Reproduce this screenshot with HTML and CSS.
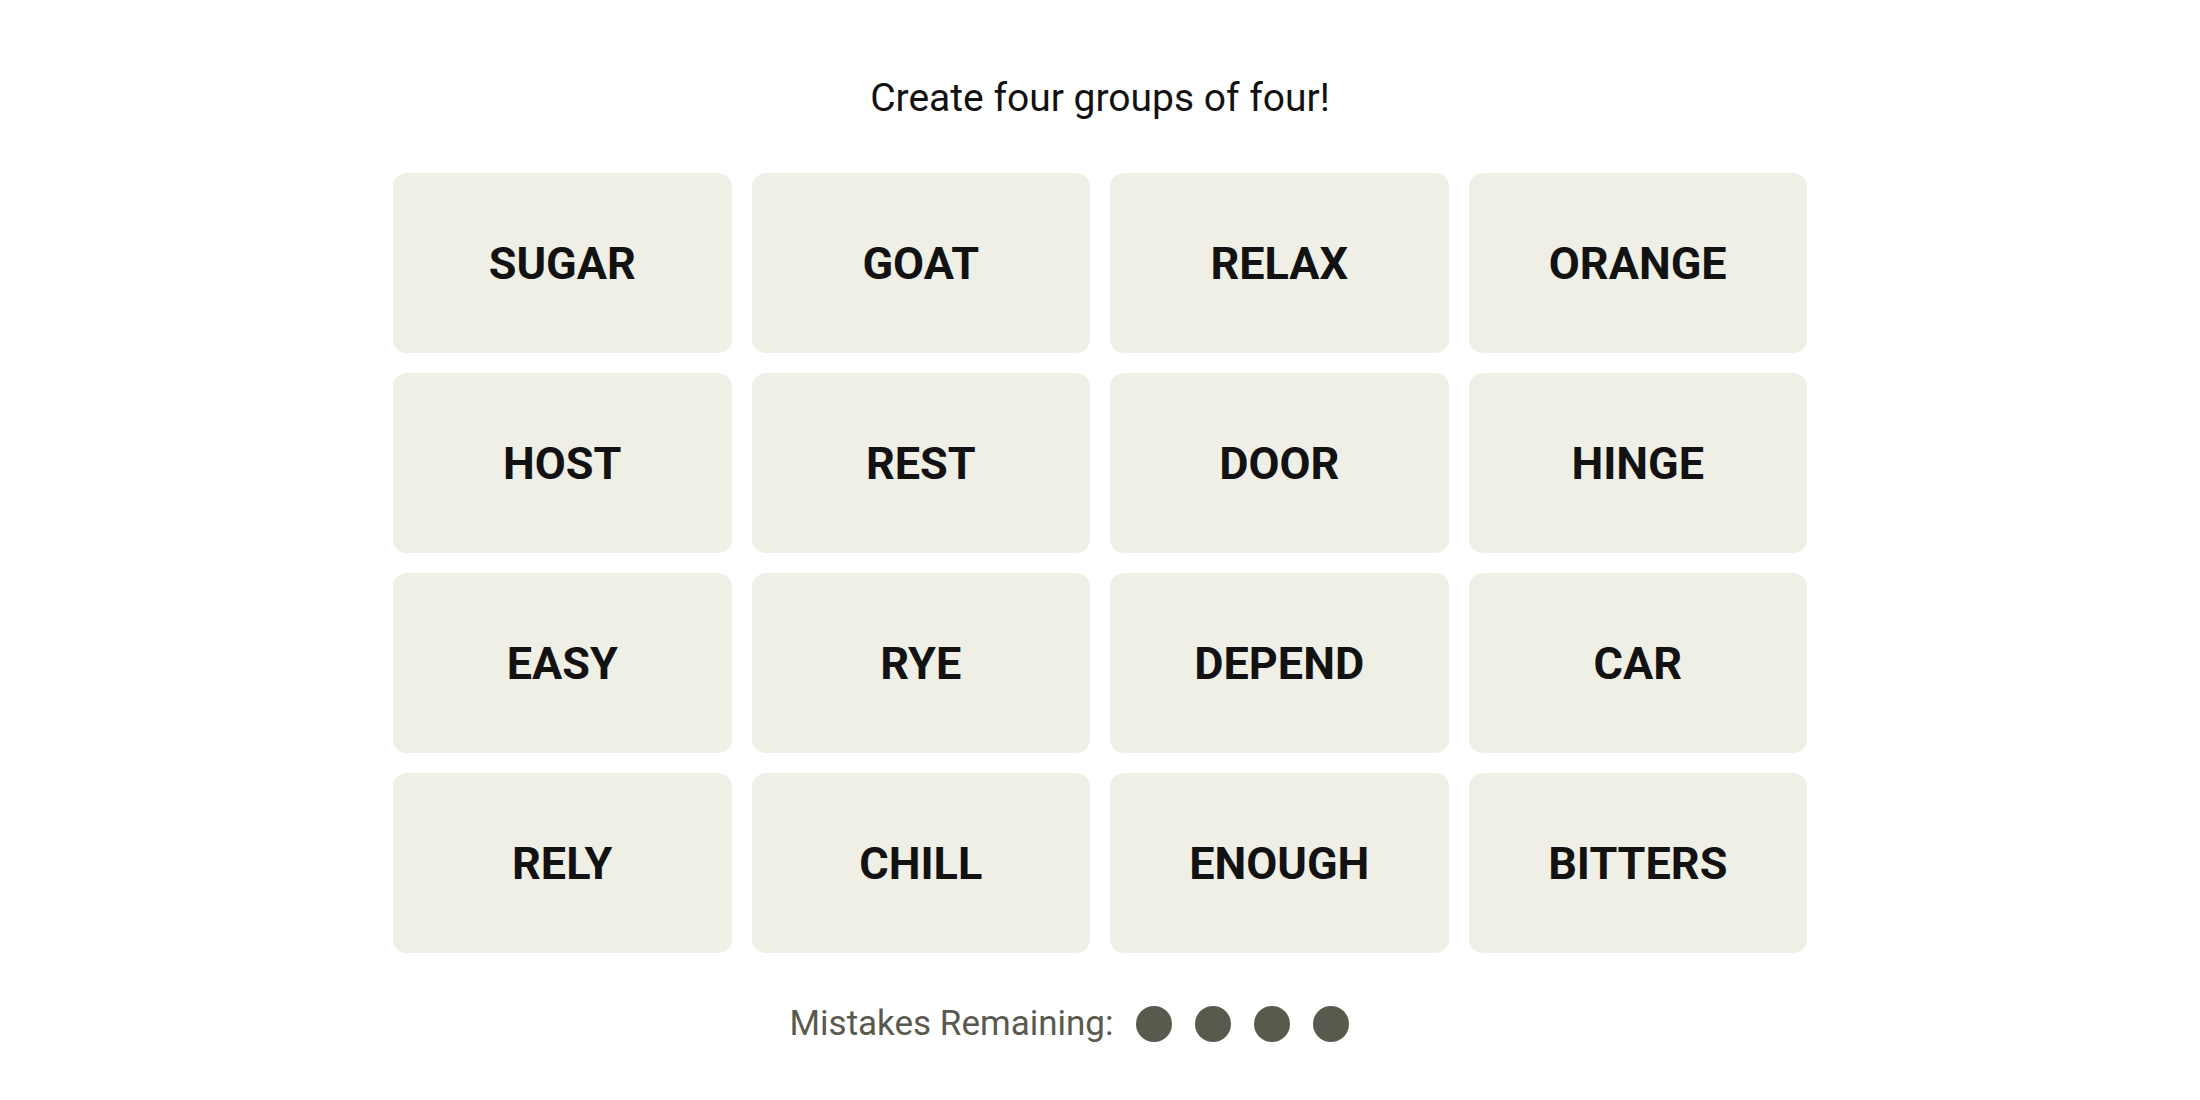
FILE: index.html
```html
<!DOCTYPE html>
<html lang="en">
<head>
  <meta charset="UTF-8">
  <title>Connections</title>
  <link rel="stylesheet" href="styles.css">
</head>
<body>

<div class="game">
  <p class="prompt">Create four groups of four!</p>

  <div class="board">
    <div class="card">SUGAR</div>
    <div class="card">GOAT</div>
    <div class="card">RELAX</div>
    <div class="card">ORANGE</div>
    <div class="card">HOST</div>
    <div class="card">REST</div>
    <div class="card">DOOR</div>
    <div class="card">HINGE</div>
    <div class="card">EASY</div>
    <div class="card">RYE</div>
    <div class="card">DEPEND</div>
    <div class="card">CAR</div>
    <div class="card">RELY</div>
    <div class="card">CHILL</div>
    <div class="card">ENOUGH</div>
    <div class="card">BITTERS</div>
  </div>

  <div class="mistakes">
    <span class="mistakes-label">Mistakes Remaining:</span>
    <div class="dots">
      <span class="dot"></span>
      <span class="dot"></span>
      <span class="dot"></span>
      <span class="dot"></span>
    </div>
  </div>
</div>

</body>
</html>
```

FILE: styles.css
```css
body {
  margin: 0;
  background: #fff;
  color: #000;
  font-family: Roboto, "Liberation Sans", Arial, sans-serif;
}

.game {
  width: 1414px;
  margin: 0 auto;
  padding-top: 74px;
}

.prompt {
  margin: 0 0 51px;
  font-size: 39px;
  line-height: 48px;
  text-align: center;
  color: #121212;
}

.board {
  display: grid;
  grid-template-columns: repeat(4, 1fr);
  grid-auto-rows: 180px;
  gap: 20px;
}

.card {
  display: flex;
  align-items: center;
  justify-content: center;
  background: #efefe6;
  border-radius: 14px;
  font-size: 45px;
  font-weight: 700;
  color: #121212;
}

.mistakes {
  display: flex;
  align-items: center;
  justify-content: center;
  margin-top: 47px;
  padding-right: 62px;
  height: 48px;
}

.mistakes-label {
  font-size: 35px;
  line-height: 48px;
  color: #5a594e;
  margin-right: 22px;
}

.dots {
  display: flex;
  gap: 23px;
}

.dot {
  width: 36px;
  height: 36px;
  border-radius: 50%;
  background: #5a594e;
}
```
